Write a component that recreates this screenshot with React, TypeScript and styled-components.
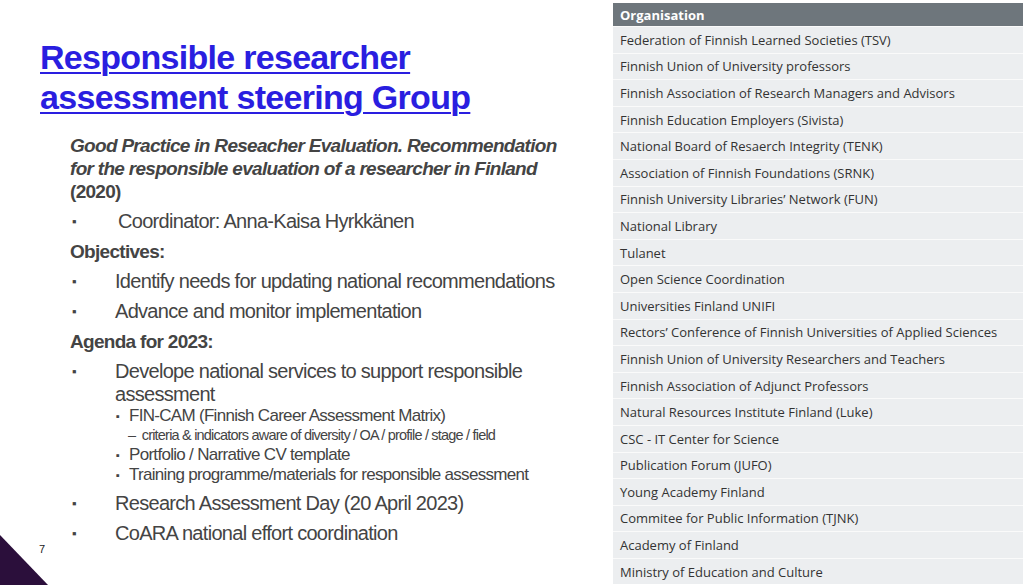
import React from "react";
import styled, { createGlobalStyle } from "styled-components";

const G = createGlobalStyle`
  html, body { margin: 0; padding: 0; background: #fff; }
  body { width: 1024px; height: 585px; overflow: hidden; }
`;

const Page = styled.div`
  display: flex; width: 1024px; height: 585px; position: relative; overflow: hidden;
  font-family: "Liberation Sans", Arial, sans-serif;
`;
const Left = styled.div`
  width: 613px; flex: none; padding: 37px 0 0 40px; box-sizing: border-box;
`;
const Title = styled.h1`
  margin: 0 0 17px; font-size: 34px; line-height: 40px; font-weight: bold;
  color: #2a1ee0; text-decoration: underline; text-decoration-thickness: 2px;
  text-underline-offset: 3px; letter-spacing: -0.7px;
`;
const Body = styled.div`
  padding-left: 30px; color: #444; letter-spacing: -0.7px; width: 515px;
`;
const Heading = styled.div<{ $italic?: boolean }>`
  font-weight: bold; font-size: 19px; line-height: 23px;
  font-style: ${p => (p.$italic ? "italic" : "normal")};
  margin-top: ${p => (p.$italic ? 0 : 7)}px;
`;
const Item = styled.div`
  display: flex; font-size: 20px; line-height: 23px; margin-top: 7px; white-space: nowrap;
`;
const Bullet = styled.span`
  width: 43px; flex: none; padding-left: 2px; font-size: 13px; line-height: 23px;
`;
const Sub = styled.div`
  display: flex; padding-left: 46px; font-size: 17px; line-height: 20px; white-space: nowrap;
`;
const SubBullet = styled.span`
  width: 13px; flex: none; font-size: 11px; line-height: 20px;
`;
const SubSub = styled.div`
  padding-left: 58px; font-size: 14.5px; line-height: 19px; letter-spacing: -0.8px; white-space: nowrap;
`;
const Triangle = styled.div`
  position: absolute; left: 0; bottom: 0; width: 0; height: 0;
  border-bottom: 50px solid #2b0f3b; border-right: 48px solid transparent;
`;
const PageNum = styled.div`
  position: absolute; left: 39px; top: 543px; font-size: 11px; color: #222;
`;
const Table = styled.div`
  width: 410px; margin-top: 3px; font-family: "Open Sans", sans-serif; font-size: 13px;
  display: flex; flex-direction: column;
`;
const Head = styled.div`
  height: 23px; background: #6e767c; color: #fff; font-weight: bold;
  padding-left: 7px; display: flex; align-items: center;
`;
const Row = styled.div`
  height: 25.6px; background: #eceef0; border-top: 1px solid #fafafa; color: #333;
  padding-left: 7px; display: flex; align-items: center;
`;

const orgs = [
  "Federation of Finnish Learned Societies (TSV)",
  "Finnish Union of University professors",
  "Finnish Association of Research Managers and Advisors",
  "Finnish Education Employers (Sivista)",
  "National Board of Resaerch Integrity (TENK)",
  "Association of Finnish Foundations (SRNK)",
  "Finnish University Libraries’ Network (FUN)",
  "National Library",
  "Tulanet",
  "Open Science Coordination",
  "Universities Finland UNIFI",
  "Rectors’ Conference of Finnish Universities of Applied Sciences",
  "Finnish Union of University Researchers and Teachers",
  "Finnish Association of Adjunct Professors",
  "Natural Resources Institute Finland (Luke)",
  "CSC - IT Center for Science",
  "Publication Forum (JUFO)",
  "Young Academy Finland",
  "Commitee for Public Information (TJNK)",
  "Academy of Finland",
  "Ministry of Education and Culture",
];

export default function App() {
  return (
    <Page>
      <G />
      <Left>
        <Title>Responsible researcher<br />assessment steering Group</Title>
        <Body>
          <Heading $italic>
            Good Practice in Reseacher Evaluation. Recommendation<br />for the responsible evaluation of a researcher in Finland<br />
            <span style={{ fontStyle: "normal" }}>(2020)</span>
          </Heading>
          <Item><Bullet>▪</Bullet><span style={{ paddingLeft: 3 }}>Coordinator: Anna-Kaisa Hyrkkänen</span></Item>
          <Heading>Objectives:</Heading>
          <Item><Bullet>▪</Bullet>Identify needs for updating national recommendations</Item>
          <Item><Bullet>▪</Bullet>Advance and monitor implementation</Item>
          <Heading>Agenda for 2023:</Heading>
          <Item><Bullet>▪</Bullet><span>Develope national services to support responsible<br />assessment</span></Item>
          <Sub><SubBullet>▪</SubBullet>FIN-CAM (Finnish Career Assessment Matrix)</Sub>
          <SubSub>–&nbsp; criteria &amp; indicators aware of diversity / OA / profile / stage / field</SubSub>
          <Sub><SubBullet>▪</SubBullet>Portfolio / Narrative CV template</Sub>
          <Sub><SubBullet>▪</SubBullet>Training programme/materials for responsible assessment</Sub>
          <Item><Bullet>▪</Bullet>Research Assessment Day (20 April 2023)</Item>
          <Item><Bullet>▪</Bullet>CoARA national effort coordination</Item>
        </Body>
      </Left>
      <Table>
        <Head>Organisation</Head>
        {orgs.map(o => <Row key={o}>{o}</Row>)}
      </Table>
      <Triangle />
      <PageNum>7</PageNum>
    </Page>
  );
}
